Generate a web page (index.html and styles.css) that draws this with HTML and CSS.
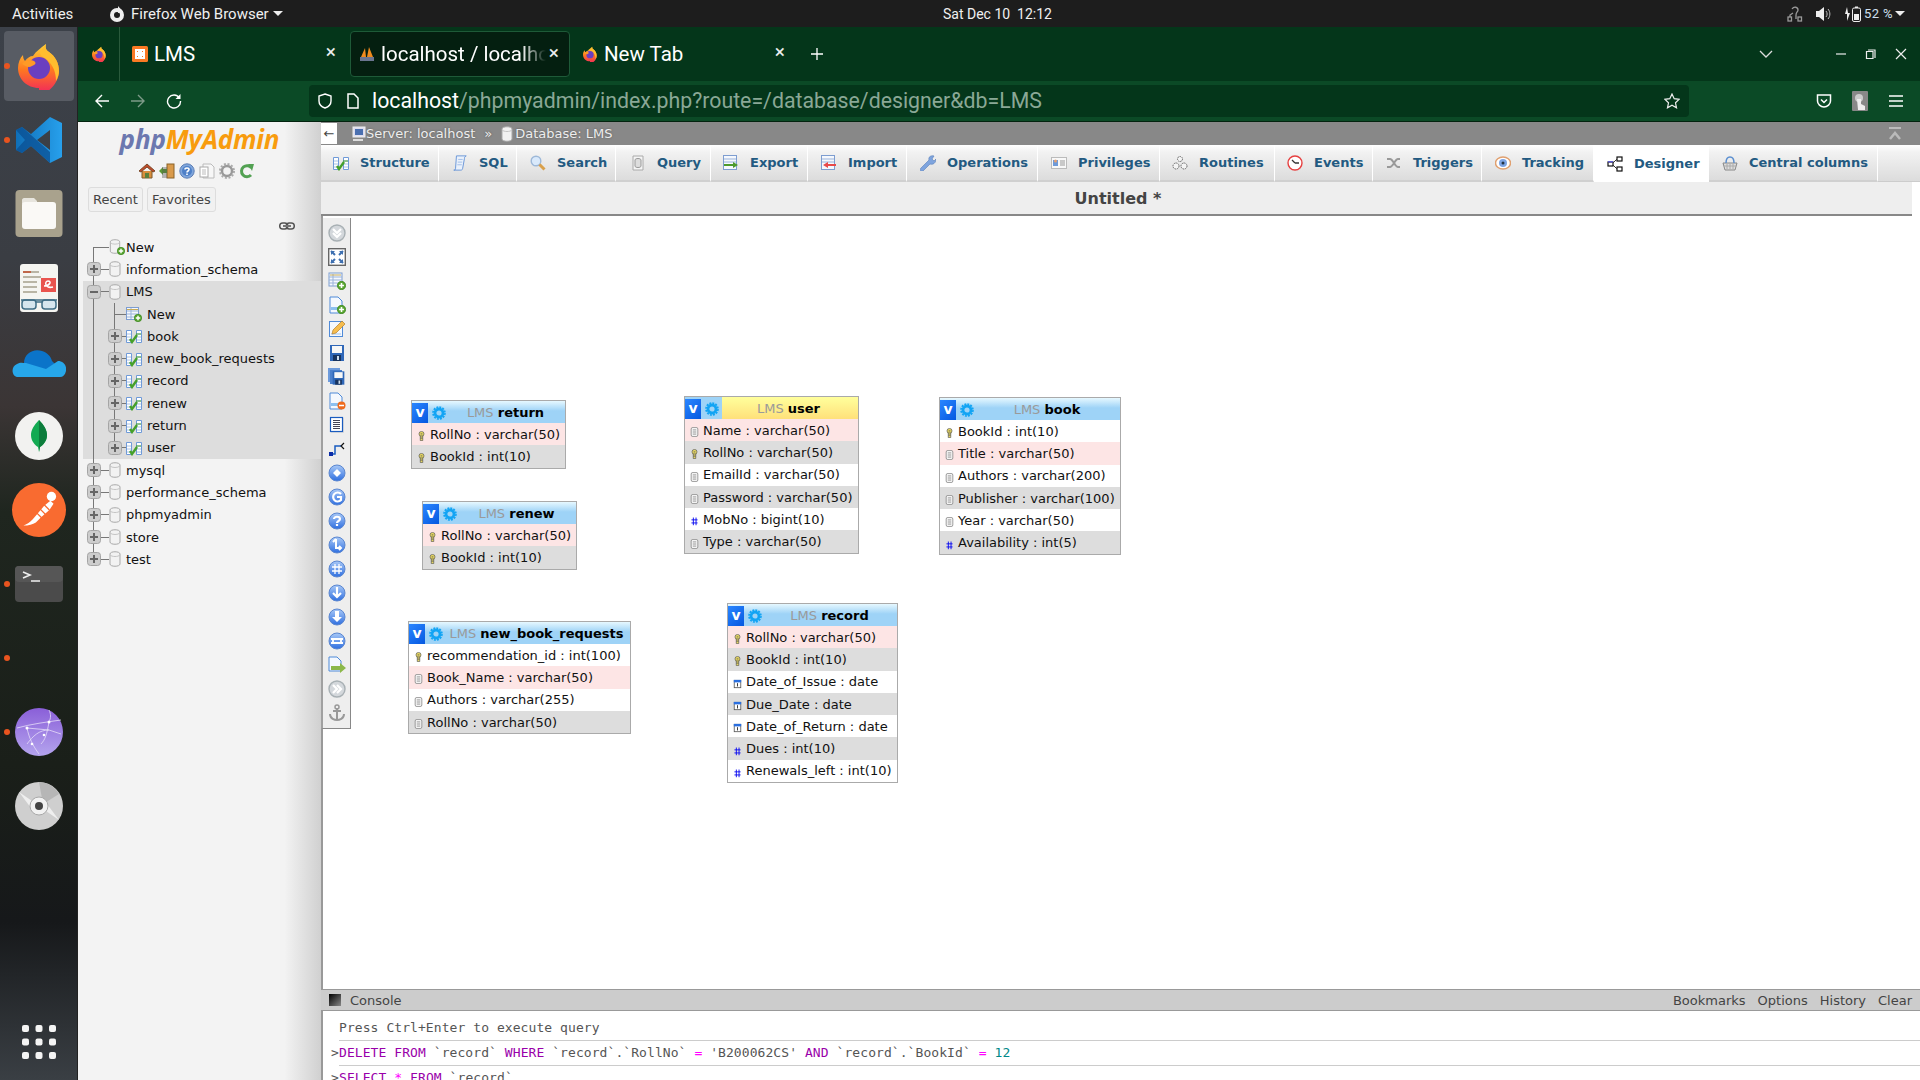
FILE: index.html
```html
<!DOCTYPE html>
<html lang="en">
<head>
<meta charset="utf-8">
<title>localhost / localhost / LMS | phpMyAdmin</title>
<link rel="stylesheet" href="styles.css">
</head>
<body>
<svg class="sprite" aria-hidden="true">
<defs>
<linearGradient id="gFx" x1="0" y1="0" x2="0" y2="1"><stop offset="0" stop-color="#ffd53a"/><stop offset=".5" stop-color="#ff7a1f"/><stop offset="1" stop-color="#f0245f"/></linearGradient>
<linearGradient id="gOrb" x1="0" y1="0" x2="0" y2="1"><stop offset="0" stop-color="#a9c9f7"/><stop offset="1" stop-color="#2f6fe0"/></linearGradient>
<linearGradient id="gVs" x1="0" y1="0" x2="1" y2="0"><stop offset="0" stop-color="#0f6fb8"/><stop offset="1" stop-color="#27a0ec"/></linearGradient>
<linearGradient id="gNet" x1="0" y1="0" x2="0" y2="1"><stop offset="0" stop-color="#8a5fd8"/><stop offset="1" stop-color="#b4a4ee"/></linearGradient>
<linearGradient id="gCon" x1="0" y1="0" x2="1" y2="1"><stop offset="0" stop-color="#000"/><stop offset="1" stop-color="#888"/></linearGradient>

<symbol id="firefox" viewBox="0 0 48 48">
<path fill="url(#gFx)" d="M24 46C12 46 3 37 3 26c0-5 2-10 5-13 0 3 1 5 2 6 2-3 5-5 8-5 3-5 8-8 13-12-1 4 0 6 3 8 6 4 10 11 10 19 0 10-9 23-20 23z"/>
<path fill="#ffbd2e" d="M31 2c-1 4 0 6 3 8 6 4 10 11 10 19 0 3-1 7-3 10 0-10-4-19-13-24-2-1-3-3-3-5 2-3 4-6 6-8z"/>
<circle fill="#6a3fc0" cx="24" cy="26" r="11"/>
<path fill="#ff9a26" d="M7 22c3-4 8-5 12-3 3 2 1 4-2 5-3 2-5 1-10-2z"/>
</symbol>
<symbol id="ffmark" viewBox="0 0 16 16"><circle cx="8" cy="9" r="7" fill="#eee"/><circle cx="8" cy="9" r="3" fill="#1d1d1d"/><path fill="#eee" d="M9 0c1 2 4 3 5 6l-5 1z"/></symbol>
<symbol id="xampp" viewBox="0 0 16 16"><rect width="16" height="16" rx="1.5" fill="#fb7a24"/><path fill="none" stroke="#fff" stroke-width="2" d="M4 4h3v3H4zM9 4h3v3H9zM4 9h3v3H4zM9 9h3v3H9z"/></symbol>
<symbol id="pmafav" viewBox="0 0 16 16"><path fill="#f08a1d" d="M2 11 6 2l1 9zM8 11l2-10 4 10z"/><rect x="1" y="11" width="14" height="4" fill="#6b7590"/></symbol>

<symbol id="db" viewBox="0 0 12 16"><path fill="#f2f2f2" stroke="#a9a9a9" d="M1 3c0-3 10-3 10 0v10c0 3-10 3-10 0z"/><path fill="none" stroke="#c4c4c4" d="M1 4c2 2 8 2 10 0"/></symbol>
<symbol id="add" viewBox="0 0 8 8"><circle cx="4" cy="4" r="3.7" fill="#5aa632" stroke="#2f7d12" stroke-width=".6"/><path stroke="#fff" stroke-width="1.4" d="M4 1.8v4.4M1.8 4h4.4"/></symbol>
<symbol id="dbnew" viewBox="0 0 16 16"><use href="#db" x="0" y="0" width="12" height="15"/><use href="#add" x="8" y="8" width="8" height="8"/></symbol>
<symbol id="tblnew" viewBox="0 0 16 16"><rect x=".5" y="1.5" width="12" height="12" fill="#f5f8fd" stroke="#7d9dd0"/><path stroke="#9ab3da" d="M1 5h11M1 8h11M1 11h11M5 2v11"/><path stroke="#c9ab55" d="M1 3.5h11"/><use href="#add" x="8" y="8" width="8" height="8"/></symbol>
<symbol id="tbl" viewBox="0 0 16 16"><path fill="#fff" stroke="#6f9ad8" d="M.5 2.5h5v12h-5zM10.500 2.500h5v12h-5z"/><path stroke="#a7c2e6" d="M1 6h4M1 9h4M1 12h4M11 6h4M11 9h4M11 12h4"/><path fill="none" stroke="#45a02a" stroke-width="2.400" d="M4 11l2 3 5-7"/><path stroke="#45a02a" d="M10 6h5"/></symbol>
<symbol id="plus" viewBox="0 0 14 14"><rect x=".5" y=".5" width="13" height="13" rx="3" fill="#cdcdcd" stroke="#a5a5a5"/><path stroke="#666" stroke-width="2" d="M3 7h8M7 3v8"/></symbol>
<symbol id="minus" viewBox="0 0 14 14"><rect x=".5" y=".5" width="13" height="13" rx="3" fill="#cdcdcd" stroke="#a5a5a5"/><path stroke="#666" stroke-width="2" d="M3 7h8"/></symbol>

<symbol id="home" viewBox="0 0 16 16"><path fill="#d98e3d" stroke="#7f5a2a" d="M3 8v7h10V8"/><path fill="#c04a2a" stroke="#7a4a2a" d="M0 8 8 1l8 7-2 1-6-5-6 5z"/><rect x="6" y="10" width="4" height="5" fill="#5b7f3c"/></symbol>
<symbol id="exit" viewBox="0 0 16 16"><rect x="8" y="1" width="7" height="14" fill="#d99a4b" stroke="#8a6228"/><path fill="#5a9a35" d="M0 8l4-4v2h4v4H4v2z"/><rect x="3" y="4" width="5" height="11" fill="#555" opacity=".4"/></symbol>
<symbol id="help" viewBox="0 0 16 16"><circle cx="8" cy="8" r="7.200" fill="#7fa6dc" stroke="#5d7fb5"/><circle cx="8" cy="8" r="5" fill="#4e80c8"/><path fill="none" stroke="#fff" stroke-width="1.600" d="M6 6.500c0-2 4-2 4 0 0 1.500-2 1.500-2 3M8 10.500v1.500"/></symbol>
<symbol id="docs" viewBox="0 0 16 16"><path fill="#f7f7f7" stroke="#bbb" d="M4 1h8l3 3v11H4z"/><rect x="1" y="4" width="8" height="10" fill="#fff" stroke="#aaa"/><path stroke="#bbb" d="M3 7h4M3 9h4M3 11h4"/></symbol>
<symbol id="gear" viewBox="0 0 16 16"><circle cx="8" cy="8" r="5" fill="none" stroke="#999" stroke-width="2.500"/><circle cx="8" cy="8" r="7" fill="none" stroke="#aaa" stroke-width="2" stroke-dasharray="2 1.700"/></symbol>
<symbol id="reload" viewBox="0 0 16 16"><path fill="none" stroke="#52a152" stroke-width="3" d="M12.500 5A5.500 5.500 0 1 0 12 12"/><path fill="#52a152" d="M9 1l6 0-2 7z"/></symbol>
<symbol id="chain" viewBox="0 0 16 8"><rect x=".7" y="1" width="8" height="6" rx="3" fill="none" stroke="#555" stroke-width="1.500"/><rect x="7.300" y="1" width="8" height="6" rx="3" fill="none" stroke="#555" stroke-width="1.500"/><path stroke="#777" stroke-width="2" d="M4 4h8"/></symbol>

<symbol id="t-sql" viewBox="0 0 16 18"><path fill="#eaf1fb" stroke="#5f8fd6" d="M4 1h11c-2 1-2 2-2 3l-2 11c0 2-2 2-2 2H1c2 0 2-1 2-2z"/><path stroke="#9bb9e6" d="M6 5h5M5.500 8h5M5 11h5"/></symbol>
<symbol id="t-search" viewBox="0 0 16 16"><circle cx="6" cy="6" r="4.800" fill="#d9e9fb" stroke="#9db8d8" stroke-width="1.400"/><path stroke="#d9a04b" stroke-width="3" d="M9.500 9.500l5 5"/></symbol>
<symbol id="t-query" viewBox="0 0 16 16"><path fill="#f5f5f5" stroke="#aaa" d="M3 1h10v14H3z"/><path fill="#ddd" stroke="#999" d="M5 5c0-2 6-2 6 0v6c0 2-6 2-6 0z"/></symbol>
<symbol id="t-export" viewBox="0 0 16 16"><rect x=".5" y=".5" width="13" height="14" fill="#f5f8fd" stroke="#7d9dd0"/><path stroke="#9ab3da" d="M1 4h12M1 7h12"/><path fill="#4d9a2c" d="M1 9h9V7l5 3-5 3v-2H1z"/></symbol>
<symbol id="t-import" viewBox="0 0 16 16"><rect x=".5" y=".5" width="13" height="14" fill="#f5f8fd" stroke="#7d9dd0"/><path stroke="#9ab3da" d="M1 4h12M1 7h12"/><path fill="#e84a4a" d="M15 9H7V7l-5 3 5 3v-2h8z"/></symbol>
<symbol id="t-ops" viewBox="0 0 16 16"><path fill="#7ea4de" stroke="#5a7fb8" stroke-width=".6" d="M1 13 9 5c-1-3 2-5 5-4l-2 3 2 2 2-2c0 4-3 6-6 5l-7 7c-2 1-4-1-2-3z"/></symbol>
<symbol id="t-priv" viewBox="0 0 16 14"><rect x=".5" y="1.500" width="15" height="11" fill="#f8f8f8" stroke="#bbb"/><rect x="2" y="4" width="5" height="6" fill="#6f9ad8"/><circle cx="4.500" cy="5" r="1.500" fill="#e5a070"/><path stroke="#999" d="M9 5h5M9 7h5M9 9h5"/></symbol>
<symbol id="t-rout" viewBox="0 0 16 16"><g fill="#f4f4f4" stroke="#666"><circle cx="8" cy="4" r="2.500" stroke-dasharray="1.500 .7"/><circle cx="4" cy="11" r="3" stroke-dasharray="1.500 .7"/><circle cx="12" cy="11" r="3" stroke-dasharray="1.500 .7"/></g></symbol>
<symbol id="t-event" viewBox="0 0 16 16"><circle cx="8" cy="8" r="7" fill="#fff" stroke="#e64040" stroke-width="1.400"/><path stroke="#333" stroke-width="1.300" d="M8 8 5 5M8 8h4"/></symbol>
<symbol id="t-trig" viewBox="0 0 16 14"><path fill="none" stroke="#999" stroke-width="2" d="M1 3h3c3 0 5 8 8 8h2M1 11h3c3 0 5-8 8-8h2"/></symbol>
<symbol id="t-track" viewBox="0 0 16 14"><ellipse cx="8" cy="7" rx="7.500" ry="6" fill="#fff" stroke="#e0a070" stroke-width="1.500"/><circle cx="8" cy="7" r="4" fill="#7da4e4"/><circle cx="8" cy="7" r="1.500" fill="#234"/></symbol>
<symbol id="t-design" viewBox="0 0 16 16"><g fill="#fff" stroke="#111" stroke-width="1.200"><rect x="10" y="1" width="5" height="4"/><rect x="10" y="11" width="5" height="4"/><rect x="1" y="6" width="5" height="4"/></g><path fill="none" stroke="#333" d="M6 7l4-4M6 9l4 4"/><rect x="1" y="5" width="5" height="1.500" fill="#5a5ad0"/></symbol>
<symbol id="t-basket" viewBox="0 0 16 16"><path fill="#ddd" stroke="#888" d="M1 8h14l-2 7H3z"/><path fill="none" stroke="#5b8fd0" stroke-width="1.500" d="M4 8c0-8 8-8 8 0"/><path stroke="#aaa" d="M5 9v5M8 9v5M11 9v5M2 11h12"/></symbol>

<symbol id="p-down" viewBox="0 0 18 18"><circle cx="9" cy="9" r="8" fill="#d4d8dc" stroke="#a8b0b4" stroke-width="1.400"/><path fill="none" stroke="#fff" stroke-width="2.200" d="M5 5l4 4 4-4M5 9l4 4 4-4"/></symbol>
<symbol id="p-right" viewBox="0 0 18 18"><circle cx="9" cy="9" r="8" fill="#d4d8dc" stroke="#a8b0b4" stroke-width="1.400"/><path fill="none" stroke="#fff" stroke-width="2.200" d="M5 5l4 4-4 4M9 5l4 4-4 4"/></symbol>
<symbol id="p-full" viewBox="0 0 18 18"><rect x=".7" y=".7" width="16.600" height="16.600" fill="#fff" stroke="#666" stroke-width="1.400"/><path fill="none" stroke="#3d6fb0" stroke-width="2" d="M3 3l4 4M15 3l-4 4M3 15l4-4M15 15l-4-4"/><path fill="#3d6fb0" d="M3 3h4L3 7zM15 3h-4l4 4zM3 15h4l-4-4zM15 15h-4l4-4z"/></symbol>
<symbol id="p-tadd" viewBox="0 0 18 18"><rect x="1" y="1" width="13" height="13" fill="#f5f8fd" stroke="#7d9dd0"/><path stroke="#9ab3da" d="M1 5h13M1 8h13M1 11h13M5 2v12"/><path stroke="#c9ab55" d="M2 3h11"/><use href="#add" x="9" y="9" width="9" height="9"/></symbol>
<symbol id="p-page" viewBox="0 0 18 18"><path fill="#f4f8fe" stroke="#4f8ad8" d="M2 1h8l4 4v12H2z"/><path fill="#8cc0f0" d="M3 11h10v3H3z"/></symbol>
<symbol id="p-padd" viewBox="0 0 18 18"><use href="#p-page" width="18" height="18"/><use href="#add" x="9" y="9" width="9" height="9"/></symbol>
<symbol id="p-pdel" viewBox="0 0 18 18"><use href="#p-page" width="18" height="18"/><circle cx="13.500" cy="13.500" r="4" fill="#ee6a1c"/><path stroke="#fff" stroke-width="1.500" d="M11 13.500h5"/></symbol>
<symbol id="p-edit" viewBox="0 0 18 18"><rect x="1.500" y="1.500" width="13" height="15" fill="#f4f8fe" stroke="#4f8ad8"/><path stroke="#9fc4ee" d="M3 14h10"/><path fill="#f6bd4f" stroke="#b4802a" stroke-width=".7" d="M4 14l1-4 9-9 3 3-9 9z"/></symbol>
<symbol id="p-save" viewBox="0 0 18 18"><rect x="2" y="1" width="14" height="16" fill="#2f67b8"/><rect x="4" y="2" width="10" height="7" fill="#f7f7f7"/><rect x="5" y="11" width="8" height="6" fill="#17335f"/><rect x="9" y="12" width="2" height="4" fill="#cde"/></symbol>
<symbol id="p-saves" viewBox="0 0 18 18"><rect x="0" y="0" width="12" height="14" fill="#6d9bdc"/><rect x="2" y="2" width="12" height="14" fill="#4b80cc"/><use href="#p-save" x="3" y="2" width="15" height="16"/></symbol>
<symbol id="p-list" viewBox="0 0 18 18"><rect x="3" y="2" width="13" height="15" fill="#ddd"/><rect x="2.500" y="1.500" width="12" height="14" fill="#fff" stroke="#1a5cc0" stroke-width="1.200"/><path stroke="#445" d="M5 4.500h7M5 6.500h7M5 8.500h7M5 10.500h7M5 12.500h7"/></symbol>
<symbol id="p-rel" viewBox="0 0 18 18"><path fill="none" stroke="#1a5cc0" stroke-width="1.500" d="M3 14h4V6h6"/><path fill="#0a2ca8" d="M1 12h4v4H1z"/><path fill="none" stroke="#111" stroke-width="1.200" d="M16 3l-3 3 3 3"/></symbol>
<symbol id="orb" viewBox="0 0 18 18"><circle cx="9" cy="9" r="8" fill="url(#gOrb)" stroke="#5a86d0"/></symbol>
<symbol id="o1" viewBox="0 0 18 18"><use href="#orb" width="18" height="18"/><path fill="#fff" d="M9 5l4 4-4 4-4-4z"/></symbol>
<symbol id="o2" viewBox="0 0 18 18"><use href="#orb" width="18" height="18"/><path fill="none" stroke="#fff" stroke-width="2.200" d="M13 6a4.500 4.500 0 1 0 0 6V9H9"/></symbol>
<symbol id="o3" viewBox="0 0 18 18"><use href="#orb" width="18" height="18"/><path fill="none" stroke="#fff" stroke-width="2.200" d="M6 7c0-3 6-3 6 0 0 2-3 2-3 4M9 12v2"/></symbol>
<symbol id="o4" viewBox="0 0 18 18"><use href="#orb" width="18" height="18"/><path fill="none" stroke="#fff" stroke-width="2" d="M8 3v9h5M5 6l3-3M11 10l2 2-2 2"/></symbol>
<symbol id="o5" viewBox="0 0 18 18"><use href="#orb" width="18" height="18"/><path stroke="#fff" stroke-width="1.300" d="M7 4v10M11 4v10M4 7h10M4 11h10"/></symbol>
<symbol id="o6" viewBox="0 0 18 18"><use href="#orb" width="18" height="18"/><path fill="none" stroke="#fff" stroke-width="2.200" d="M9 3v10M5 9l4 4 4-4"/></symbol>
<symbol id="o7" viewBox="0 0 18 18"><use href="#orb" width="18" height="18"/><path fill="#fff" d="M7 3h4v6h3l-5 5-5-5h3z"/></symbol>
<symbol id="o8" viewBox="0 0 18 18"><use href="#orb" width="18" height="18"/><path fill="none" stroke="#fff" stroke-width="1.800" d="M3 7h12M3 11h12M5 7v4M13 7v4"/></symbol>
<symbol id="p-exp" viewBox="0 0 18 18"><path fill="#f4f8fe" stroke="#4f8ad8" d="M1 1h8l4 4v10H1z"/><path fill="#8cb84a" d="M3 10h9V7l6 5-6 5v-3H3z"/></symbol>
<symbol id="p-anchor" viewBox="0 0 18 18"><path fill="none" stroke="#999" stroke-width="2" d="M9 4v12M5 7h8M2 10c0 5 5 6 7 6s7-1 7-6"/><circle cx="9" cy="3" r="2" fill="none" stroke="#999" stroke-width="1.500"/></symbol>

<symbol id="f-key" viewBox="0 0 8 12"><circle cx="4" cy="3.500" r="3" fill="#e8d860" stroke="#555" stroke-width=".8"/><path fill="#e8d860" stroke="#555" stroke-width=".8" d="M2.500 6h3v5.500h-3z"/><path stroke="#555" d="M3 3.500h2M2.500 8.500h3"/></symbol>
<symbol id="f-txt" viewBox="0 0 9 12"><rect x=".5" y=".5" width="8" height="11" rx="2" fill="#f3f3f3" stroke="#8a8a8a"/><path stroke="#8a8a8a" d="M2.500 3.500h4M2.500 6h4M2.500 8.500h4"/></symbol>
<symbol id="f-num" viewBox="-1 -1 11 13"><path stroke="#0a0af0" stroke-width="1.200" fill="none" d="M3 1v10M6.500 1v10M.5 4h8M.5 8h8"/></symbol>
<symbol id="f-cal" viewBox="-1 -1 11 12"><rect x=".5" y=".5" width="8" height="9" fill="#fff" stroke="#555"/><rect width="9" height="3" fill="#2a6fe0"/><path stroke="#111" d="M4.500 4v4"/></symbol>
<symbol id="f-gear" viewBox="0 0 14 14"><circle cx="7" cy="7" r="4" fill="none" stroke="#12a4f4" stroke-width="2.800"/><circle cx="7" cy="7" r="6" fill="none" stroke="#12a4f4" stroke-width="1.600" stroke-dasharray="2 1.100"/></symbol>

<symbol id="d-vscode" viewBox="0 0 48 48"><path fill="url(#gVs)" d="M35 1l12 6v34l-12 6-19-17-9 7-6-3V14l6-3 9 7zM35 14 22 24l13 10z"/><path fill="#0b4f92" d="M1 14l6-3 28 25v11L16 30l-9 7-6-3 9-10z" opacity=".75"/></symbol>
<symbol id="d-files" viewBox="0 0 48 48"><rect x=".5" width="47" height="47" rx="4" fill="#a9a28d"/><path fill="#e7e5de" d="M7 10c0-1 1-2 2-2h10l3 3v3H7z"/><rect x="7" y="12" width="34" height="27" rx="3" fill="#faf9f6"/></symbol>
<symbol id="d-reader" viewBox="0 0 38 48"><rect width="38" height="48" rx="3" fill="#f5f5f1"/><rect x="21" y="14" width="15" height="14" fill="#e9544e"/><path fill="none" stroke="#fff" stroke-width="1.500" d="M24 22c6 0 8-5 4-5s-3 8 5 6"/><path stroke="#b9b5a5" stroke-width="2" d="M3 8h16M3 13h18M3 18h14M3 23h14M3 28h14"/><path stroke="#c0674a" stroke-width="2" d="M3 8h8"/><g fill="#d6e6ee" stroke="#3f6d85" stroke-width="1.500"><rect x="2" y="36" width="14" height="9" rx="3"/><rect x="22" y="36" width="14" height="9" rx="3"/></g><path stroke="#3f6d85" stroke-width="1.500" d="M16 38h6M1 36h36"/></symbol>
<symbol id="d-cloud" viewBox="0 0 54 30"><path fill="#0b74c9" d="M12 16C12 6 22 1 30 4c6 2 9 6 10 10l8 8H8z"/><path fill="#27a7ea" d="M6 30C0 30-2 20 5 17c3-2 6-1 9-1l20 6 12-8c5 0 9 4 8 10-1 4-3 6-6 6z"/></symbol>
<symbol id="d-mongo" viewBox="0 0 48 48"><ellipse cx="24" cy="24" rx="24" ry="24" fill="#f2f2f0"/><path fill="#13aa52" d="M24 8c5 5 8 10 8 15 0 6-4 10-7 12l-1 5-1-5c-3-2-7-6-7-12 0-5 3-10 8-15z"/><path fill="#0d7d3c" d="M24 8c5 5 8 10 8 15 0 6-4 10-7 12l-1 5z"/></symbol>
<symbol id="d-postman" viewBox="0 0 52 52"><circle cx="26" cy="26" r="26" fill="#f96b30"/><path fill="#fff" d="M11 41c3-1 6-3 9-6l11-13 6-5 3 3-4 6-8 7-5 5c-3 2-7 3-12 3z"/><circle cx="38" cy="13" r="4.500" fill="#fff"/><path stroke="#f96b30" stroke-width="1.200" d="M23 28l6 6M26 24l7 7M30 20l6 6"/></symbol>
<symbol id="d-term" viewBox="0 0 48 36"><rect width="48" height="36" rx="4" fill="#4b4b4b"/><rect width="48" height="16" rx="4" fill="#565656"/><path fill="none" stroke="#eee" stroke-width="1.600" d="M8 6l7 3-7 3M16 15h9"/></symbol>
<symbol id="d-net" viewBox="0 0 48 48"><circle cx="24" cy="24" r="24" fill="url(#gNet)"/><g fill="none" stroke="#e5dcf8" stroke-width=".8"><path d="M2 20c14-4 30-6 44-8M12 20c2 10 6 18 12 26M34 14c-2 12-4 18-8 22M12 36c6-8 12-14 22-14l12 4M12 20l22 2M34 2c2 4 2 8 0 12"/></g><g fill="#fff"><circle cx="12" cy="20" r="1.500"/><circle cx="34" cy="14" r="1.500"/><circle cx="29" cy="27" r="1.300"/><circle cx="17" cy="36" r="1.300"/></g></symbol>
<symbol id="d-disc" viewBox="0 0 48 48"><circle cx="24" cy="24" r="24" fill="#cfcfcf"/><path fill="#efefef" d="M4 10 20 21l-4 5zM44 38 28 27l4-5z"/><path fill="#b6b6b6" d="M24 0a24 24 0 0 1 20 12L28 22z"/><circle cx="24" cy="24" r="9" fill="#f2f2f2" stroke="#a9a9a9"/><circle cx="24" cy="24" r="4" fill="#444"/></symbol>
<symbol id="d-grid" viewBox="0 0 34 34"><g fill="#f4f4f4"><rect width="7" height="7" rx="2"/><rect x="13.500" width="7" height="7" rx="2"/><rect x="27" width="7" height="7" rx="2"/><rect y="13.500" width="7" height="7" rx="2"/><rect x="13.500" y="13.500" width="7" height="7" rx="2"/><rect x="27" y="13.500" width="7" height="7" rx="2"/><rect y="27" width="7" height="7" rx="2"/><rect x="13.500" y="27" width="7" height="7" rx="2"/><rect x="27" y="27" width="7" height="7" rx="2"/></g></symbol>
</defs>
</svg>

<header class="topbar">
  <span class="tb-act">Activities</span>
  <svg class="tb-ff"><use href="#ffmark"/></svg>
  <span class="tb-app">Firefox Web Browser</span><span class="caret"></span>
  <span class="tb-clock">Sat Dec 10&nbsp; 12:12</span>
  <svg class="tb-ic tb-net" viewBox="0 0 16 16"><g fill="none" stroke="#9a9a9a" stroke-width="1.300"><rect x="1" y="11" width="3.500" height="4"/><rect x="11" y="11" width="3.500" height="4"/><path d="M3 11V9l3-2M5 3c2-3 6-2 6 1 0 2-2 2-2 5v4"/></g></svg>
  <svg class="tb-ic tb-vol" viewBox="0 0 16 16"><path fill="#eee" d="M1 5h3l5-4v14l-5-4H1z"/><path fill="none" stroke="#bbb" d="M11 5c1.500 2 1.500 4 0 6M13 3c2.500 3 2.500 7 0 10"/></svg>
  <svg class="tb-ic tb-bat" viewBox="0 0 16 16"><path fill="#eee" d="M2 1 0 8h2v7l3-8H3z"/><rect x="7.500" y="2" width="8" height="13.500" rx="1.500" fill="none" stroke="#eee"/><rect x="10" y=".5" width="3" height="1.500" fill="#eee"/><rect x="9" y="8" width="5" height="6" fill="#eee"/></svg>
  <span class="tb-pct">52 %</span><span class="caret"></span>
</header>

<div class="desk">
  <aside class="dock">
    <div class="dk dk-active"><svg class="dk-ic"><use href="#firefox"/></svg><i class="dot"></i></div>
    <div class="dk"><svg class="dk-ic"><use href="#d-vscode"/></svg><i class="dot"></i></div>
    <div class="dk"><svg class="dk-ic"><use href="#d-files"/></svg></div>
    <div class="dk"><svg class="dk-ic"><use href="#d-reader"/></svg></div>
    <div class="dk"><svg class="dk-ic dk-wide"><use href="#d-cloud"/></svg></div>
    <div class="dk"><svg class="dk-ic"><use href="#d-mongo"/></svg></div>
    <div class="dk"><svg class="dk-ic dk-wide"><use href="#d-postman"/></svg></div>
    <div class="dk"><svg class="dk-ic"><use href="#d-term"/></svg><i class="dot"></i></div>
    <div class="dk"><i class="dot"></i></div>
    <div class="dk"><svg class="dk-ic"><use href="#d-net"/></svg><i class="dot"></i></div>
    <div class="dk"><svg class="dk-ic"><use href="#d-disc"/></svg></div>
    <div class="dk-spacer"></div>
    <svg class="dk-grid"><use href="#d-grid"/></svg>
  </aside>

  <div class="window">
    <div class="tabstrip">
      <div class="fx-view"><svg class="fav"><use href="#firefox"/></svg></div>
      <div class="tab tab-lms"><svg class="fav"><use href="#xampp"/></svg><span class="tab-t">LMS</span><span class="tab-x">×</span></div>
      <div class="tab tab-on"><svg class="fav"><use href="#pmafav"/></svg><span class="tab-t tab-fade">localhost / localhost</span><span class="tab-x">×</span></div>
      <div class="tab tab-new"><svg class="fav"><use href="#firefox"/></svg><span class="tab-t">New Tab</span><span class="tab-x">×</span></div>
      <svg class="ws-ic tab-plus" viewBox="0 0 14 14"><path stroke="#fff" stroke-width="1.300" d="M7 1v12M1 7h12"/></svg>
      <div class="grow"></div>
      <svg class="ws-ic ws-more" viewBox="0 0 14 14"><path fill="none" stroke="#ddd" stroke-width="1.300" d="M1 4l6 6 6-6"/></svg>
      <svg class="ws-ic ws-min" viewBox="0 0 14 14"><path stroke="#eee" stroke-width="1.200" d="M2 7h10"/></svg>
      <svg class="ws-ic ws-max" viewBox="0 0 14 14"><path fill="none" stroke="#eee" stroke-width="1.200" d="M4 3h7v8M2.500 4.500h6.500v7H2.500z"/></svg>
      <svg class="ws-ic ws-close" viewBox="0 0 14 14"><path stroke="#eee" stroke-width="1.200" d="M2 2l10 10M12 2 2 12"/></svg>
    </div>
    <div class="navbar">
      <svg class="nv back" viewBox="0 0 16 16"><path fill="none" stroke="#fff" stroke-width="1.400" d="M15 8H2M8 2 2 8l6 6"/></svg>
      <svg class="nv fwd" viewBox="0 0 16 16"><path fill="none" stroke="#7d9a88" stroke-width="1.400" d="M1 8h13M8 2l6 6-6 6"/></svg>
      <svg class="nv rel" viewBox="0 0 16 16"><path fill="none" stroke="#fff" stroke-width="1.400" d="M13.500 5A6.500 6.500 0 1 0 14.500 8"/><path fill="#fff" d="M14.500 1v5h-5z"/></svg>
      <div class="urlbar">
        <svg class="nv shield" viewBox="0 0 16 16"><path fill="none" stroke="#fff" stroke-width="1.400" d="M8 1l6 2v5c0 4-3 6-6 7-3-1-6-3-6-7V3z"/></svg>
        <svg class="nv page" viewBox="0 0 16 16"><path fill="none" stroke="#fff" stroke-width="1.500" d="M3 1h6l4 4v10H3z"/></svg>
        <span class="url"><b>localhost</b>/phpmyadmin/index.php?route=/database/designer&amp;db=LMS</span>
        <svg class="nv star" viewBox="0 0 16 16"><path fill="none" stroke="#eee" stroke-width="1.200" d="M8 1l2.200 4.700 5 .6-3.700 3.500 1 5L8 12.300 3.500 14.800l1-5L.8 6.300l5-.6z"/></svg>
      </div>
      <svg class="nv pocket" viewBox="0 0 16 16"><path fill="none" stroke="#fff" stroke-width="1.500" d="M1.500 2h13v6c0 3-3 6-6.500 6S1.500 11 1.500 8z"/><path fill="none" stroke="#fff" stroke-width="1.500" d="M5 6.500l3 3 3-3"/></svg>
      <svg class="nv ext" viewBox="0 0 16 20"><rect width="16" height="20" rx="1" fill="#888"/><circle cx="7" cy="7" r="4" fill="#ccc"/><path fill="#eee" d="M5 8h4v5l4 2v4H6z"/></svg>
      <svg class="nv menu" viewBox="0 0 16 16"><path stroke="#fff" stroke-width="1.300" d="M1 3h14M1 8h14M1 13h14"/></svg>
    </div>

    <div class="pma">
      <nav class="side">
        <div class="logo"><span class="lg-php">php</span><span class="lg-my">MyAdmin</span></div>
        <div class="side-ic">
          <svg class="si"><use href="#home"/></svg><svg class="si"><use href="#exit"/></svg><svg class="si"><use href="#help"/></svg><svg class="si"><use href="#docs"/></svg><svg class="si"><use href="#gear"/></svg><svg class="si"><use href="#reload"/></svg>
        </div>
        <div class="side-btns"><span class="sbtn">Recent</span><span class="sbtn">Favorites</span></div>
        <div class="side-link"><svg class="chain"><use href="#chain"/></svg></div>
        <ul class="tree">
          <li class="node lv0 first"><span class="branch"></span><svg class="nic"><use href="#dbnew"/></svg><span>New</span></li>
          <li class="node lv0"><svg class="exp"><use href="#plus"/></svg><span class="stub"></span><svg class="nic"><use href="#db"/></svg><span>information_schema</span></li>
          <li class="node lv0 hl"><svg class="exp"><use href="#minus"/></svg><span class="stub"></span><svg class="nic"><use href="#db"/></svg><span>LMS</span></li>
          <li class="node lv1 hl"><span class="branch"></span><svg class="nic2"><use href="#tblnew"/></svg><span>New</span></li>
          <li class="node lv1 hl"><svg class="exp"><use href="#plus"/></svg><span class="stub"></span><svg class="nic2"><use href="#tbl"/></svg><span>book</span></li>
          <li class="node lv1 hl"><svg class="exp"><use href="#plus"/></svg><span class="stub"></span><svg class="nic2"><use href="#tbl"/></svg><span>new_book_requests</span></li>
          <li class="node lv1 hl"><svg class="exp"><use href="#plus"/></svg><span class="stub"></span><svg class="nic2"><use href="#tbl"/></svg><span>record</span></li>
          <li class="node lv1 hl"><svg class="exp"><use href="#plus"/></svg><span class="stub"></span><svg class="nic2"><use href="#tbl"/></svg><span>renew</span></li>
          <li class="node lv1 hl"><svg class="exp"><use href="#plus"/></svg><span class="stub"></span><svg class="nic2"><use href="#tbl"/></svg><span>return</span></li>
          <li class="node lv1 hl last"><svg class="exp"><use href="#plus"/></svg><span class="stub"></span><svg class="nic2"><use href="#tbl"/></svg><span>user</span></li>
          <li class="node lv0"><svg class="exp"><use href="#plus"/></svg><span class="stub"></span><svg class="nic"><use href="#db"/></svg><span>mysql</span></li>
          <li class="node lv0"><svg class="exp"><use href="#plus"/></svg><span class="stub"></span><svg class="nic"><use href="#db"/></svg><span>performance_schema</span></li>
          <li class="node lv0"><svg class="exp"><use href="#plus"/></svg><span class="stub"></span><svg class="nic"><use href="#db"/></svg><span>phpmyadmin</span></li>
          <li class="node lv0"><svg class="exp"><use href="#plus"/></svg><span class="stub"></span><svg class="nic"><use href="#db"/></svg><span>store</span></li>
          <li class="node lv0 last"><svg class="exp"><use href="#plus"/></svg><span class="stub"></span><svg class="nic"><use href="#db"/></svg><span>test</span></li>
        </ul>
      </nav>

      <main class="content">
        <div class="crumb">
          <span class="crumb-back">←</span>
          <svg class="cr-ic" viewBox="0 0 16 16"><rect x="3" y="1" width="12" height="10" fill="#dde" stroke="#eee"/><rect x="5" y="3" width="8" height="6" fill="#4a6fb0"/><path stroke="#ddd" stroke-width="2" d="M3 14h10"/></svg>
          <span class="cr-t">Server: localhost</span><span class="cr-sep">»</span>
          <svg class="cr-ic cr-db"><use href="#db"/></svg>
          <span class="cr-t">Database: LMS</span>
          <div class="grow"></div>
          <svg class="cr-up" viewBox="0 0 14 14"><path stroke="#bbb" stroke-width="2" d="M1 1h12"/><path fill="none" stroke="#bbb" stroke-width="2.500" d="M2 12l5-6 5 6"/></svg>
        </div>
        <div class="menu-tabs">
          <a class="mt mt-1"><svg class="mi"><use href="#tbl"/></svg>Structure</a>
          <a class="mt mt-2"><svg class="mi"><use href="#t-sql"/></svg>SQL</a>
          <a class="mt mt-3"><svg class="mi"><use href="#t-search"/></svg>Search</a>
          <a class="mt mt-4"><svg class="mi"><use href="#t-query"/></svg>Query</a>
          <a class="mt mt-5"><svg class="mi"><use href="#t-export"/></svg>Export</a>
          <a class="mt mt-6"><svg class="mi"><use href="#t-import"/></svg>Import</a>
          <a class="mt mt-7"><svg class="mi"><use href="#t-ops"/></svg>Operations</a>
          <a class="mt mt-8"><svg class="mi"><use href="#t-priv"/></svg>Privileges</a>
          <a class="mt mt-9"><svg class="mi"><use href="#t-rout"/></svg>Routines</a>
          <a class="mt mt-10"><svg class="mi"><use href="#t-event"/></svg>Events</a>
          <a class="mt mt-11"><svg class="mi"><use href="#t-trig"/></svg>Triggers</a>
          <a class="mt mt-12"><svg class="mi"><use href="#t-track"/></svg>Tracking</a>
          <a class="mt mt-13 mt-on"><svg class="mi"><use href="#t-design"/></svg>Designer</a>
          <a class="mt mt-14"><svg class="mi"><use href="#t-basket"/></svg>Central columns</a>
          <div class="mt-fill"></div>
        </div>
        <div class="titlebar"><h1 class="untitled">Untitled *</h1></div>
        <div class="canvas">
          <div class="tools">
            <svg class="tool"><use href="#p-down"/></svg>
            <svg class="tool"><use href="#p-full"/></svg>
            <svg class="tool"><use href="#p-tadd"/></svg>
            <svg class="tool"><use href="#p-padd"/></svg>
            <svg class="tool"><use href="#p-edit"/></svg>
            <svg class="tool"><use href="#p-save"/></svg>
            <svg class="tool"><use href="#p-saves"/></svg>
            <svg class="tool"><use href="#p-pdel"/></svg>
            <svg class="tool"><use href="#p-list"/></svg>
            <svg class="tool"><use href="#p-rel"/></svg>
            <svg class="tool"><use href="#o1"/></svg>
            <svg class="tool"><use href="#o2"/></svg>
            <svg class="tool"><use href="#o3"/></svg>
            <svg class="tool"><use href="#o4"/></svg>
            <svg class="tool"><use href="#o5"/></svg>
            <svg class="tool"><use href="#o6"/></svg>
            <svg class="tool"><use href="#o7"/></svg>
            <svg class="tool"><use href="#o8"/></svg>
            <svg class="tool"><use href="#p-exp"/></svg>
            <svg class="tool"><use href="#p-right"/></svg>
            <svg class="tool"><use href="#p-anchor"/></svg>
          </div>

          <section class="dt dt-return">
            <div class="dh"><span class="vb">v</span><svg class="dg"><use href="#f-gear"/></svg><span class="dtitle"><span class="dbn">LMS</span> <b>return</b></span></div>
            <div class="dr pink"><svg class="fi"><use href="#f-key"/></svg>RollNo : varchar(50)</div>
            <div class="dr grey"><svg class="fi"><use href="#f-key"/></svg>BookId : int(10)</div>
          </section>
          <section class="dt dt-renew">
            <div class="dh"><span class="vb">v</span><svg class="dg"><use href="#f-gear"/></svg><span class="dtitle"><span class="dbn">LMS</span> <b>renew</b></span></div>
            <div class="dr pink"><svg class="fi"><use href="#f-key"/></svg>RollNo : varchar(50)</div>
            <div class="dr grey"><svg class="fi"><use href="#f-key"/></svg>BookId : int(10)</div>
          </section>
          <section class="dt dt-user">
            <div class="dh dh-y"><span class="vb">v</span><svg class="dg"><use href="#f-gear"/></svg><span class="dtitle"><span class="dbn">LMS</span> <b>user</b></span></div>
            <div class="dr pink"><svg class="fi"><use href="#f-txt"/></svg>Name : varchar(50)</div>
            <div class="dr grey"><svg class="fi"><use href="#f-key"/></svg>RollNo : varchar(50)</div>
            <div class="dr"><svg class="fi"><use href="#f-txt"/></svg>EmailId : varchar(50)</div>
            <div class="dr grey"><svg class="fi"><use href="#f-txt"/></svg>Password : varchar(50)</div>
            <div class="dr"><svg class="fi"><use href="#f-num"/></svg>MobNo : bigint(10)</div>
            <div class="dr grey"><svg class="fi"><use href="#f-txt"/></svg>Type : varchar(50)</div>
          </section>
          <section class="dt dt-book">
            <div class="dh"><span class="vb">v</span><svg class="dg"><use href="#f-gear"/></svg><span class="dtitle"><span class="dbn">LMS</span> <b>book</b></span></div>
            <div class="dr"><svg class="fi"><use href="#f-key"/></svg>BookId : int(10)</div>
            <div class="dr pink"><svg class="fi"><use href="#f-txt"/></svg>Title : varchar(50)</div>
            <div class="dr"><svg class="fi"><use href="#f-txt"/></svg>Authors : varchar(200)</div>
            <div class="dr grey"><svg class="fi"><use href="#f-txt"/></svg>Publisher : varchar(100)</div>
            <div class="dr"><svg class="fi"><use href="#f-txt"/></svg>Year : varchar(50)</div>
            <div class="dr grey"><svg class="fi"><use href="#f-num"/></svg>Availability : int(5)</div>
          </section>
          <section class="dt dt-nbr">
            <div class="dh"><span class="vb">v</span><svg class="dg"><use href="#f-gear"/></svg><span class="dtitle"><span class="dbn">LMS</span> <b>new_book_requests</b></span></div>
            <div class="dr"><svg class="fi"><use href="#f-key"/></svg>recommendation_id : int(100)</div>
            <div class="dr pink"><svg class="fi"><use href="#f-txt"/></svg>Book_Name : varchar(50)</div>
            <div class="dr"><svg class="fi"><use href="#f-txt"/></svg>Authors : varchar(255)</div>
            <div class="dr grey"><svg class="fi"><use href="#f-txt"/></svg>RollNo : varchar(50)</div>
          </section>
          <section class="dt dt-record">
            <div class="dh"><span class="vb">v</span><svg class="dg"><use href="#f-gear"/></svg><span class="dtitle"><span class="dbn">LMS</span> <b>record</b></span></div>
            <div class="dr pink"><svg class="fi"><use href="#f-key"/></svg>RollNo : varchar(50)</div>
            <div class="dr grey"><svg class="fi"><use href="#f-key"/></svg>BookId : int(10)</div>
            <div class="dr"><svg class="fi"><use href="#f-cal"/></svg>Date_of_Issue : date</div>
            <div class="dr grey"><svg class="fi"><use href="#f-cal"/></svg>Due_Date : date</div>
            <div class="dr"><svg class="fi"><use href="#f-cal"/></svg>Date_of_Return : date</div>
            <div class="dr grey"><svg class="fi"><use href="#f-num"/></svg>Dues : int(10)</div>
            <div class="dr"><svg class="fi"><use href="#f-num"/></svg>Renewals_left : int(10)</div>
          </section>
        </div>
        <div class="console-bar">
          <svg class="con-ic"><rect width="12" height="12" fill="url(#gCon)"/></svg><span class="con-t">Console</span>
          <div class="grow"></div>
          <span class="con-a">Bookmarks</span><span class="con-a">Options</span><span class="con-a">History</span><span class="con-a">Clear</span>
        </div>
        <div class="console">
          <div class="cl cl-hint">Press Ctrl+Enter to execute query</div>
          <div class="cl cl-q"><span class="pr">&gt;</span><span class="kw">DELETE FROM</span> `record` <span class="kw">WHERE</span> `record`.`RollNo` <span class="op">=</span> 'B200062CS' <span class="kw">AND</span> `record`.`BookId` <span class="op">=</span> <span class="nm">12</span></div>
          <div class="cl cl-q"><span class="pr">&gt;</span><span class="kw">SELECT</span> <span class="op">*</span> <span class="kw">FROM</span> `record`</div>
        </div>
      </main>
    </div>
  </div>
</div>
</body>
</html>
```
FILE: styles.css
```css
* { box-sizing: border-box; }
html, body { margin: 0; padding: 0; }
body { width: 1920px; height: 1080px; overflow: hidden; display: flex; flex-direction: column; background: #000; font-family: "DejaVu Sans", sans-serif; font-size: 13px; color: #111; }
.sprite { position: absolute; width: 0; height: 0; }
.grow { flex: 1; }

/* GNOME top bar */
.topbar { height: 27px; flex: none; background: #1d1d1d; color: #f0f0f0; display: flex; align-items: center; font-family: Roboto, sans-serif; font-size: 15px; }
.tb-act { margin-left: 12px; width: 97px; }
.tb-ff { width: 16px; height: 16px; margin-right: 6px; }
.tb-app { width: 142px; }
.caret { width: 0; height: 0; border: 5px solid transparent; border-top: 5px solid #eee; border-bottom: 0; flex: none; }
.tb-clock { margin-left: 660px; width: 844px; font-size: 14px; }
.tb-ic { width: 16px; height: 16px; margin-right: 12px; flex: none; }
.tb-vol { margin-right: 14px; }
.tb-bat { margin-right: 3px; }
.tb-pct { width: 31px; font-size: 13px; letter-spacing: .4px; color: #cfe0f0; }

.desk { flex: 1; display: flex; min-height: 0; }

/* Dock */
.dock { width: 78px; flex: none; display: flex; flex-direction: column; align-items: center; background: linear-gradient(180deg, #3c4149 0, #3a3d43 22%, #3b3535 36%, #1f261f 46%, #1a1f19 70%, #16181a 85%, #3a3f44 100%); padding-top: 4px; border-right: 1px solid #222; }
.dk { width: 70px; height: 74px; display: flex; align-items: center; justify-content: center; position: relative; flex: none; }
.dk-active { background: #585c64; border-radius: 4px; height: 70px; margin-bottom: 2px; }
.dk-ic { width: 48px; height: 48px; }
.dk-wide { width: 54px; height: 54px; }
.dot { position: absolute; left: 0; top: 50%; margin-top: -3px; width: 6px; height: 6px; border-radius: 50%; background: #e9541f; }
.dk-spacer { flex: 1; }
.dk-grid { width: 34px; height: 34px; margin-bottom: 21px; flex: none; }

/* Browser */
.window { flex: 1; display: flex; flex-direction: column; min-width: 0; }
.tabstrip { height: 54px; flex: none; background: #04361a; display: flex; align-items: center; color: #fff; font-family: Roboto, sans-serif; }
.fx-view { width: 42px; height: 54px; border-right: 1px solid #2a5a3c; display: flex; align-items: center; justify-content: center; flex: none; }
.fav { width: 16px; height: 16px; flex: none; }
.tab { height: 46px; display: flex; align-items: center; flex: none; position: relative; }
.tab-lms { width: 230px; padding-left: 12px; }
.tab-on { width: 220px; padding-left: 8px; background: #041f10; border: 1px solid #1e5a38; border-radius: 4px; }
.tab-new { width: 230px; padding-left: 12px; }
.tab-t { font-size: 20.5px; margin-left: 6px; white-space: nowrap; overflow: hidden; }
.tab-fade { width: 165px; -webkit-mask-image: linear-gradient(90deg, #000 85%, transparent 100%); mask-image: linear-gradient(90deg, #000 85%, transparent 100%); }
.tab-x { position: absolute; right: 10px; top: 10px; font-size: 19px; line-height: 22px; color: #eee; }
.tab-lms .tab-x { right: 14px; }
.tab-new .tab-x { right: 15px; }
.ws-ic { width: 14px; height: 14px; flex: none; }
.tab-plus { margin-left: 10px; }
.ws-more { margin-right: 61px; }
.ws-min { margin-right: 16px; }
.ws-max { margin-right: 16px; }
.ws-close { margin-right: 12px; }

.navbar { height: 41px; flex: none; background: #0b4a26; display: flex; align-items: center; padding-bottom: 1px; border-bottom: 1px solid #03230f; }
.nv { width: 16px; height: 16px; flex: none; }
.back { margin-left: 16px; }
.fwd { margin-left: 20px; }
.rel { margin-left: 20px; }
.urlbar { margin-left: 127px; width: 1380px; height: 32px; background: #04361a; border-radius: 4px; display: flex; align-items: center; flex: none; }
.shield { margin-left: 8px; }
.page { margin-left: 12px; }
.url { margin-left: 11px; width: 1292px; font-family: Roboto, sans-serif; font-size: 21.3px; color: #8aa896; white-space: nowrap; flex: none; }
.url b { font-weight: 400; color: #fff; }
.pocket { margin-left: 127px; }
.ext { margin-left: 20px; height: 20px; }
.menu { margin-left: 20px; }

/* phpMyAdmin */
.pma { flex: 1; display: flex; min-height: 0; background: #fff; }
.side { width: 243px; flex: none; display: flex; flex-direction: column; background: linear-gradient(90deg, #f3f3f3 0, #f3f3f3 85%, #d0d0d0 100%); }
.logo { height: 35px; text-align: center; font-family: "Open Sans", sans-serif; font-style: italic; font-weight: 700; font-size: 26px; line-height: 35px; letter-spacing: -.2px; }
.lg-php { color: #6c78af; }
.lg-my { color: #f89c0e; }
.side-ic { height: 28px; display: flex; justify-content: center; align-items: center; gap: 4px; padding-right: 5px; }
.si { width: 16px; height: 16px; }
.side-btns { display: flex; gap: 4px; margin: 2px 0 0 10px; }
.sbtn { height: 25px; padding: 0 4px; line-height: 23px; border: 1px solid #ddd; border-radius: 3px; color: #444; background: #f1f1f1; }
.side-link { height: 24px; display: flex; justify-content: flex-end; align-items: center; padding: 3px 26px 0 0; }
.chain { width: 16px; height: 8px; }
.tree { list-style: none; margin: 0 0 0 5px; padding: 0; }
.node { height: 22.3px; display: flex; align-items: center; position: relative; color: #111; white-space: nowrap; }
.node.hl { background: #ddd; }
.lv0 { padding-left: 4px; }
.lv1 { padding-left: 25px; }
.node::before { content: ""; position: absolute; left: 10px; top: 0; bottom: 0; width: 1px; background: #777; }
.lv0.first::before { top: 11px; }
.lv0.last::before { bottom: 11px; }
.lv1::after { content: ""; position: absolute; left: 31px; top: 0; bottom: 0; width: 1px; background: #777; }
.lv1.last::after { bottom: 11px; }
.exp { width: 14px; height: 14px; flex: none; position: relative; z-index: 1; }
.stub { width: 8px; height: 1px; background: #777; flex: none; }
.lv1 .stub { width: 4px; }
.branch { height: 1px; background: #777; margin-left: 7px; flex: none; width: 15px; }
.lv1 .branch { width: 11px; }
.nic { width: 12px; height: 16px; margin-right: 5px; flex: none; }
.first .nic { width: 16px; height: 16px; margin-right: 1px; }
.nic2 { width: 16px; height: 16px; margin-right: 5px; flex: none; }

.content { flex: 1; min-width: 0; display: flex; flex-direction: column; }
.crumb { height: 23px; flex: none; background: #888; display: flex; align-items: center; color: #eee; text-shadow: 0 0 2px #555; }
.crumb-back { width: 16px; height: 21px; background: #fff; color: #444; text-align: center; line-height: 21px; text-shadow: none; margin-right: 13px; flex: none; }
.cr-ic { width: 16px; height: 16px; flex: none; }
.cr-db { width: 12px; height: 16px; margin-right: 2px; }
.cr-sep { margin: 0 9px; }
.cr-up { width: 14px; height: 14px; margin-right: 18px; }
.menu-tabs { height: 37px; flex: none; display: flex; background: linear-gradient(#fff, #f2f2f2 20%, #dcdcdc); border-bottom: 1px solid #ccc; }
.mt { flex: none; height: 37px; display: flex; align-items: center; padding-left: 12px; font-weight: 700; font-size: 13px; color: #235a81; border-right: 1px solid #fff; background: linear-gradient(#fff, #f2f2f2 20%, #dcdcdc); border-bottom: 2px solid #d0d0d0; }
.mi { width: 16px; height: 16px; margin-right: 11px; flex: none; }
.mt-1 { width: 118px; }
.mt-2 { width: 78px; padding-left: 13px; }
.mt-3 { width: 99px; padding-left: 13px; }
.mt-4 { width: 95px; padding-left: 14px; }
.mt-5 { width: 97px; }
.mt-6 { width: 99px; padding-left: 13px; }
.mt-7 { width: 131px; padding-left: 13px; }
.mt-8 { width: 122px; padding-left: 13px; }
.mt-9 { width: 115px; }
.mt-10 { width: 98px; }
.mt-11 { width: 109px; padding-left: 13px; }
.mt-12 { width: 112px; padding-left: 13px; }
.mt-13 { width: 115px; padding-left: 13px; }
.mt-14 { width: 169px; padding-left: 13px; }
.mt-on { background: #fff; border-bottom: 0; }
.mt-fill { flex: 1; }
.titlebar { height: 34px; flex: none; margin-right: 8px; background: #eee; border-bottom: 2px solid #888; display: flex; align-items: center; justify-content: center; }
.untitled { margin: 0 0 0 3px; font-size: 16px; font-weight: 700; color: #444; }

.canvas { flex: 1; min-height: 0; position: relative; border-left: 2px solid #999; background: #fff; }
.tools { width: 30px; margin: 2px 0 0 -2px; background: #eee; border: 1px solid #888; border-left: 2px solid #a0a0a0; border-top: 0; display: flex; flex-direction: column; align-items: center; padding-top: 6px; }
.tool { width: 18px; height: 18px; margin-bottom: 6px; flex: none; }

/* Designer tables: free canvas, placed by the saved coordinates */
.dt { position: absolute; border: 1px solid #aaa; background: #fff; }
.dt-return { left: 88px; top: 184px; width: 155px; }
.dt-renew { left: 99px; top: 285px; width: 155px; }
.dt-user { left: 361px; top: 180px; width: 175px; }
.dt-book { left: 616px; top: 181px; width: 182px; }
.dt-nbr { left: 85px; top: 405px; width: 223px; }
.dt-record { left: 404px; top: 387px; width: 171px; }
.dh { height: 22px; display: flex; align-items: center; background: linear-gradient(#e6f8ff 0, #9ed3f7 45%, #9ed3f7 100%); }
.dh-y { background: linear-gradient(90deg, #9ed3f7 0, #9ed3f7 37px, transparent 37px), linear-gradient(#ffff9c 0, #ffe07a 100%); }
.vb { width: 16px; height: 20px; margin-top: 2px; flex: none; background: linear-gradient(135deg, #2a86ff, #0558e0); color: #fff; font-weight: 700; font-size: 14px; line-height: 18px; text-align: center; }
.dg { width: 14px; height: 14px; margin: 2px 0 0 4px; flex: none; }
.dtitle { flex: 1; text-align: center; font-size: 13px; color: #000; white-space: nowrap; padding-top: 1px; }
.dbn { color: #9a9a9a; }
.dr { height: 22.3px; display: flex; align-items: center; padding-left: 5px; color: #111; white-space: nowrap; }
.pink { background: #fde5e5; }
.grey { background: #ddd; }
.fi { width: 9px; height: 10px; margin: 4px 4px 0 0; flex: none; }

/* Console */
.console-bar { height: 22px; flex: none; background: #ccc; border-top: 1px solid #999; border-bottom: 1px solid #999; display: flex; align-items: center; padding: 0 8px; color: #444; }
.con-ic { width: 12px; height: 12px; margin: 0 9px 0 0; flex: none; }
.con-a { margin-left: 12px; }
.console { height: 69px; flex: none; overflow: hidden; border-left: 2px solid #999; background: #fff; font-family: "DejaVu Sans Mono", monospace; font-size: 13px; letter-spacing: .07px; color: #555; padding-left: 16px; }
.cl { height: 25px; line-height: 24px; border-bottom: 1px solid #ccc; white-space: pre; position: relative; }
.cl-hint { margin-top: 5px; }
.cl-q .pr { position: absolute; left: -8px; }
.kw { color: #90a; }
.op { color: #f0f; }
.nm { color: #088; }
```
